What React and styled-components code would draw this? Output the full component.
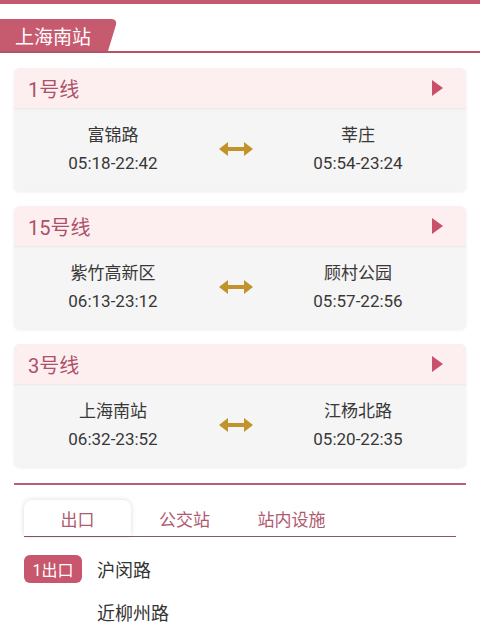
import React from "react"
import styled, { createGlobalStyle } from "styled-components"

const GlobalStyle = createGlobalStyle`
  body {
    margin: 0;
    background: #fff;
    font-family: "Roboto", "Noto Sans CJK SC", sans-serif;
  }
`

const lines = [
  { name: "1号线", from: { station: "富锦路", time: "05:18-22:42" }, to: { station: "莘庄", time: "05:54-23:24" } },
  { name: "15号线", from: { station: "紫竹高新区", time: "06:13-23:12" }, to: { station: "顾村公园", time: "05:57-22:56" } },
  { name: "3号线", from: { station: "上海南站", time: "06:32-23:52" }, to: { station: "江杨北路", time: "05:20-22:35" } },
]

const tabs = ["出口", "公交站", "站内设施"]

const exits = [
  { label: "1出口", road: "沪闵路" },
  { label: "", road: "近柳州路" },
]

const TopBar = styled.div`
  height: 4px;
  background: #c45a6f;
`

const StationBar = styled.div`
  margin-top: 15px;
  border-bottom: 2px solid #b25468;
  display: flex;
`

const StationTab = styled.div`
  position: relative;
  isolation: isolate;
  height: 32px;
  width: 108px;
  box-sizing: border-box;
  padding-left: 15px;
  display: flex;
  align-items: center;
  color: #fff;
  font-size: 19px;

  &::before {
    content: "";
    position: absolute;
    inset: 0;
    background: #c65a6e;
    border-top-right-radius: 6px;
    transform: skewX(-17deg);
    transform-origin: bottom left;
    z-index: -1;
  }
  &::after {
    content: "";
    position: absolute;
    top: 0;
    bottom: 0;
    left: 0;
    width: 20px;
    background: #c65a6e;
    z-index: -1;
  }
`

const CardList = styled.div`
  padding: 15px 14px 0;
  display: flex;
  flex-direction: column;
  gap: 15px;
`

const Card = styled.div`
  border-radius: 6px;
  overflow: hidden;
  background: #f5f5f5;
  box-shadow: 0 1px 3px rgba(0, 0, 0, 0.08);
`

const CardHeader = styled.div`
  height: 40px;
  background: #fdeef0;
  display: flex;
  align-items: center;
  justify-content: space-between;
  padding: 0 23px 0 14px;
  color: #ad5068;
  font-size: 20px;
  box-shadow: 0 1px 2px rgba(0, 0, 0, 0.06);
`

const Triangle = styled.span`
  width: 0;
  height: 0;
  border-top: 8.5px solid transparent;
  border-bottom: 8.5px solid transparent;
  border-left: 11px solid #c8506a;
`

const CardBody = styled.div`
  display: grid;
  grid-template-columns: 198px 48px 1fr;
  align-items: center;
  justify-items: center;
  padding: 13px 10px 14px 0;
`

const Terminal = styled.div`
  text-align: center;
  color: #383838;
  font-size: 17px;
  line-height: 28px;
`

const Arrow = () => (
  <svg width="34" height="14" viewBox="0 0 34 14" style={{ display: "block" }}>
    <path d="M0 7 L9 0 L9 5 L25 5 L25 0 L34 7 L25 14 L25 9 L9 9 L9 14 Z" fill="#c3932b" />
  </svg>
)

const Divider = styled.div`
  margin: 16px 14px 0;
  height: 2px;
  background: #b8607a;
`

const TabBar = styled.div`
  margin: 15px 24px 0;
  display: flex;
  border-bottom: 1px solid #8a5866;
`

const TabItem = styled.div`
  width: 107px;
  height: 36px;
  display: flex;
  align-items: center;
  justify-content: center;
  font-size: 17px;
  color: #b05a70;
  border-radius: 8px 8px 0 0;
  background: ${(p) => (p.$active ? "#fff" : "transparent")};
  box-shadow: ${(p) => (p.$active ? "0 0 5px rgba(0, 0, 0, 0.15)" : "none")};
`

const ExitList = styled.div`
  padding: 18px 24px 0;
  display: flex;
  flex-direction: column;
  gap: 15px;
`

const ExitRow = styled.div`
  display: flex;
  align-items: center;
  gap: 15px;
  height: 28px;
`

const Badge = styled.span`
  width: 58px;
  height: 28px;
  display: flex;
  align-items: center;
  justify-content: center;
  border-radius: 6px;
  background: ${(p) => (p.$empty ? "transparent" : "#c8566c")};
  color: #fff;
  font-size: 16px;
`

const Road = styled.span`
  font-size: 18px;
  color: #333;
`

export default function App() {
  return (
    <>
      <GlobalStyle />
      <TopBar />
      <StationBar>
        <StationTab>上海南站</StationTab>
      </StationBar>
      <CardList>
        {lines.map((line) => (
          <Card key={line.name}>
            <CardHeader>
              {line.name}
              <Triangle />
            </CardHeader>
            <CardBody>
              <Terminal>
                <div>{line.from.station}</div>
                <div>{line.from.time}</div>
              </Terminal>
              <Arrow />
              <Terminal>
                <div>{line.to.station}</div>
                <div>{line.to.time}</div>
              </Terminal>
            </CardBody>
          </Card>
        ))}
      </CardList>
      <Divider />
      <TabBar>
        {tabs.map((t, i) => (
          <TabItem key={t} $active={i === 0}>{t}</TabItem>
        ))}
      </TabBar>
      <ExitList>
        {exits.map((e) => (
          <ExitRow key={e.road}>
            <Badge $empty={!e.label}>{e.label}</Badge>
            <Road>{e.road}</Road>
          </ExitRow>
        ))}
      </ExitList>
    </>
  )
}
